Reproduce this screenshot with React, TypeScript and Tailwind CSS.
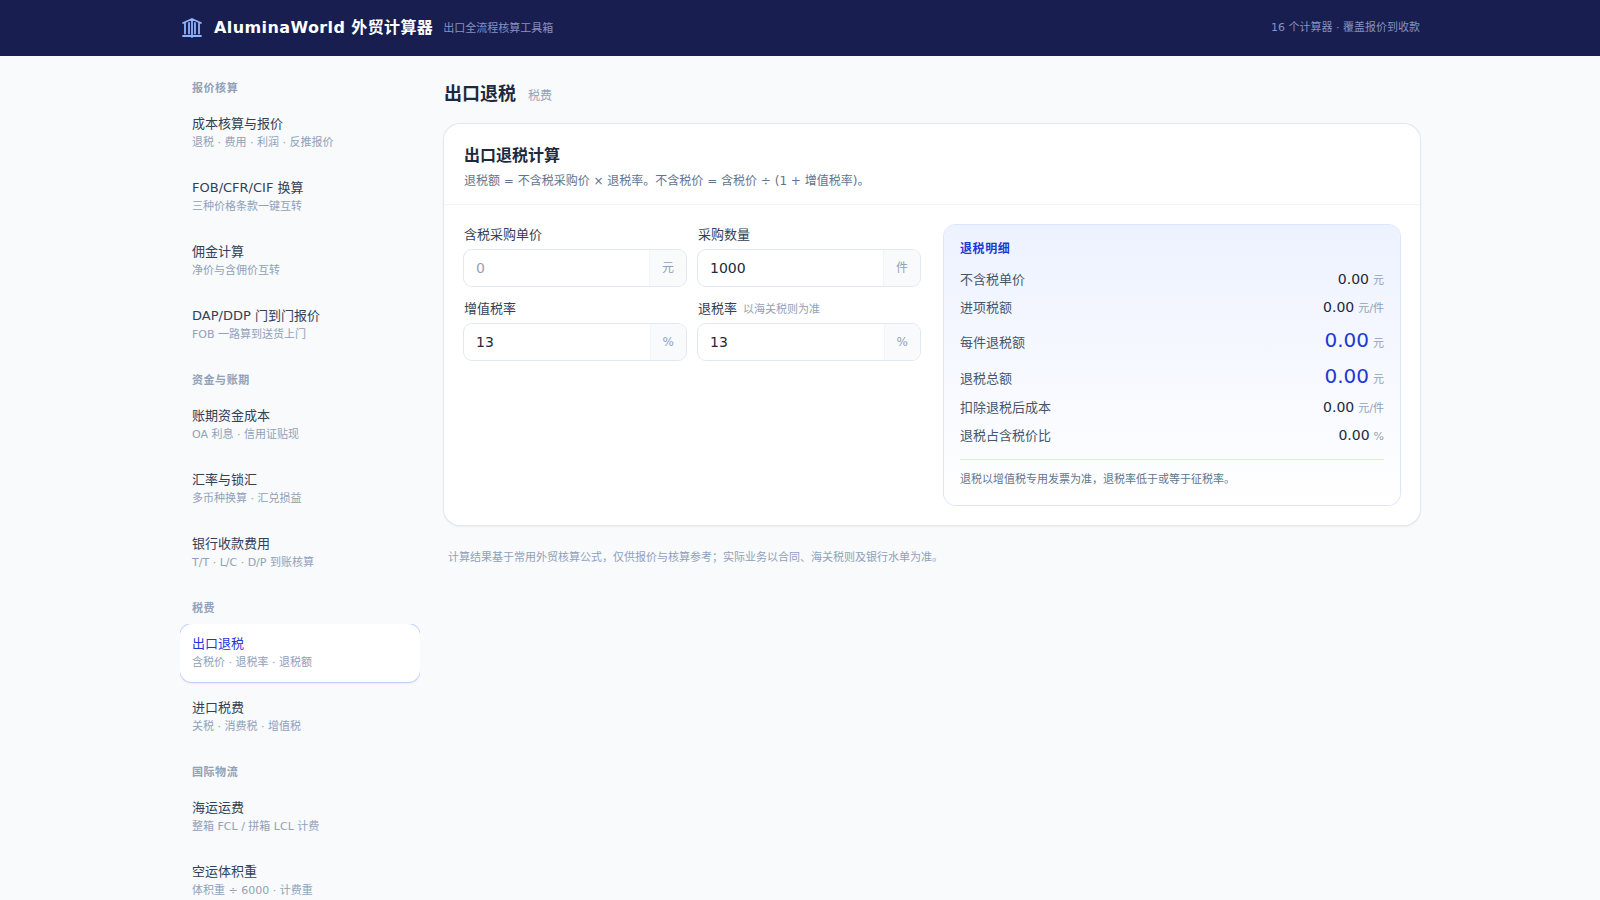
import { useId, useState } from "react";

interface NavItem {
  title: string;
  desc: string;
}

interface NavGroup {
  label: string;
  items: NavItem[];
}

const groups: NavGroup[] = [
  {
    label: "报价核算",
    items: [
      { title: "成本核算与报价", desc: "退税 · 费用 · 利润 · 反推报价" },
      { title: "FOB/CFR/CIF 换算", desc: "三种价格条款一键互转" },
      { title: "佣金计算", desc: "净价与含佣价互转" },
      { title: "DAP/DDP 门到门报价", desc: "FOB 一路算到送货上门" },
    ],
  },
  {
    label: "资金与账期",
    items: [
      { title: "账期资金成本", desc: "OA 利息 · 信用证贴现" },
      { title: "汇率与锁汇", desc: "多币种换算 · 汇兑损益" },
      { title: "银行收款费用", desc: "T/T · L/C · D/P 到账核算" },
    ],
  },
  {
    label: "税费",
    items: [
      { title: "出口退税", desc: "含税价 · 退税率 · 退税额" },
      { title: "进口税费", desc: "关税 · 消费税 · 增值税" },
    ],
  },
  {
    label: "国际物流",
    items: [
      { title: "海运运费", desc: "整箱 FCL / 拼箱 LCL 计费" },
      { title: "空运体积重", desc: "体积重 ÷ 6000 · 计费重" },
    ],
  },
];

const Logo: React.FC = () => (
  <svg
    className="h-6 w-6 text-[#8eb4ff]"
    viewBox="0 0 24 24"
    fill="none"
    stroke="currentColor"
    strokeWidth="1.8"
    strokeLinecap="round"
    strokeLinejoin="round"
    aria-hidden="true"
  >
    <path d="M3 7l9-4 9 4M5 7v10.5M9 7v10.5M12 3v18M15 7v10.5M19 7v10.5M3 20h18" />
  </svg>
);

const Header: React.FC = () => (
  <header className="bg-[#181e4f]">
    <div className="mx-auto flex h-14 max-w-7xl items-center justify-between px-5">
      <div className="flex items-center gap-2.5">
        <Logo />
        <span className="text-base font-bold tracking-wide text-white">
          AluminaWorld 外贸计算器
        </span>
        <span className="pt-0.5 text-[11px] leading-[18px] text-[#8592c4]">
          出口全流程核算工具箱
        </span>
      </div>
      <span className="text-[11px] text-[#8592c4]">
        16 个计算器 · 覆盖报价到收款
      </span>
    </div>
  </header>
);

interface SidebarProps {
  active: string;
  onSelect: (title: string) => void;
}

const Sidebar: React.FC<SidebarProps> = ({ active, onSelect }) => (
  <nav className="flex w-60 shrink-0 flex-col gap-[18px]">
    {groups.map((group) => (
      <section key={group.label}>
        <h2 className="mb-[7px] px-3 text-[11px] leading-[17px] font-bold tracking-wider text-slate-400">
          {group.label}
        </h2>
        <ul className="-mb-0.5 flex flex-col gap-1.5 overflow-hidden pb-0.5">
          {group.items.map((item) => (
            <li key={item.title}>
              <button
                type="button"
                onClick={() => onSelect(item.title)}
                className={`block w-full rounded-xl px-3 py-2.5 text-left ${
                  item.title === active
                    ? "bg-white shadow-sm ring-1 ring-[#bfd3fe]"
                    : ""
                }`}
              >
                <span
                  className={`block text-[13px] leading-[19px] ${
                    item.title === active ? "text-[#1e38d6]" : "text-slate-700"
                  }`}
                >
                  {item.title}
                </span>
                <span className="block text-[11px] leading-[19px] text-slate-400">
                  {item.desc}
                </span>
              </button>
            </li>
          ))}
        </ul>
      </section>
    ))}
  </nav>
);

interface FieldProps {
  label: string;
  hint?: string;
  unit: string;
  value: string;
  onChange: (value: string) => void;
}

const Field: React.FC<FieldProps> = ({ label, hint, unit, value, onChange }) => {
  const id = useId();
  return (
    <div>
      <label
        htmlFor={id}
        className="mb-1.5 flex h-[19px] items-baseline gap-1.5 text-[13px] leading-[19px] text-slate-700"
      >
        {label}
        {hint && <span className="text-[11px] text-slate-400">{hint}</span>}
      </label>
      <div className="flex h-9 overflow-hidden rounded-lg bg-white ring-1 ring-slate-200">
        <input
          id={id}
          inputMode="decimal"
          placeholder="0"
          value={value}
          onChange={(e) => onChange(e.target.value)}
          className="min-w-0 flex-1 px-3 text-sm text-slate-800 outline-none placeholder:text-gray-400"
        />
        <span className="flex items-center border-l border-slate-100 bg-slate-50 px-3 text-xs text-slate-400">
          {unit}
        </span>
      </div>
    </div>
  );
};

interface ResultRowProps {
  label: string;
  value: number;
  unit: string;
  big?: boolean;
}

const ResultRow: React.FC<ResultRowProps> = ({ label, value, unit, big }) => (
  <div
    className={`flex items-baseline justify-between ${
      big ? "h-9 pt-[5px]" : "h-7 pt-1"
    }`}
  >
    <dt className="text-[13px] leading-5 text-slate-600">{label}</dt>
    <dd className="flex items-baseline gap-1">
      <span
        className={
          big
            ? "text-xl leading-7 text-[#1e38d6]"
            : "text-sm leading-5 text-slate-800"
        }
      >
        {value.toFixed(2)}
      </span>
      <span className="text-[11px] leading-4 text-slate-400">{unit}</span>
    </dd>
  </div>
);

const RebateCalculator: React.FC = () => {
  const [price, setPrice] = useState("");
  const [qty, setQty] = useState("1000");
  const [vat, setVat] = useState("13");
  const [rebate, setRebate] = useState("13");

  const gross = Number(price) || 0;
  const net = gross / (1 + (Number(vat) || 0) / 100);
  const unitRebate = net * ((Number(rebate) || 0) / 100);

  return (
    <section className="rounded-2xl bg-white shadow-sm ring-1 ring-slate-200">
      <div className="border-b border-slate-100 px-5 pt-5 pb-3.5">
        <h2 className="text-base leading-6 font-bold text-slate-800">
          出口退税计算
        </h2>
        <p className="mt-1 text-xs leading-[18px] text-slate-500">
          退税额 = 不含税采购价 × 退税率。不含税价 = 含税价 ÷ (1 + 增值税率)。
        </p>
      </div>
      <div className="grid gap-6 p-5 md:grid-cols-2">
        <div className="grid grid-cols-2 content-start gap-x-3 gap-y-[13px]">
          <Field label="含税采购单价" unit="元" value={price} onChange={setPrice} />
          <Field label="采购数量" unit="件" value={qty} onChange={setQty} />
          <Field label="增值税率" unit="%" value={vat} onChange={setVat} />
          <Field
            label="退税率"
            hint="以海关税则为准"
            unit="%"
            value={rebate}
            onChange={setRebate}
          />
        </div>
        <div className="rounded-xl bg-linear-to-b from-[#edf2ff] to-white p-4 ring-1 ring-[#dbe6fe]">
          <h3 className="mb-2 text-xs leading-4 font-bold tracking-wider text-[#1e38d6]">
            退税明细
          </h3>
          <dl>
            <ResultRow label="不含税单价" value={net} unit="元" />
            <ResultRow label="进项税额" value={gross - net} unit="元/件" />
            <ResultRow label="每件退税额" value={unitRebate} unit="元" big />
            <ResultRow
              label="退税总额"
              value={unitRebate * (Number(qty) || 0)}
              unit="元"
              big
            />
            <ResultRow label="扣除退税后成本" value={gross - unitRebate} unit="元/件" />
            <ResultRow
              label="退税占含税价比"
              value={gross ? (unitRebate / gross) * 100 : 0}
              unit="%"
            />
          </dl>
          <p className="mt-2.5 border-t border-[#dbe6fe] pt-[11px] text-[11px] leading-[18px] text-slate-500">
            退税以增值税专用发票为准，退税率低于或等于征税率。
          </p>
        </div>
      </div>
    </section>
  );
};

const App: React.FC = () => {
  const [active, setActive] = useState("出口退税");

  return (
    <div className="min-h-screen bg-slate-50 font-['DejaVu_Sans','Noto_Sans_CJK_SC',sans-serif] text-slate-800">
      <Header />
      <div className="mx-auto flex max-w-7xl gap-6 px-5 py-6">
        <Sidebar active={active} onSelect={setActive} />
        <main className="min-w-0 flex-1">
          <div className="mb-4 flex items-baseline gap-3">
            <h1 className="text-lg leading-7 font-bold text-slate-800">出口退税</h1>
            <span className="text-xs text-slate-400">税费</span>
          </div>
          <RebateCalculator />
          <p className="mt-6 px-1 text-[11px] leading-[18px] text-slate-400">
            计算结果基于常用外贸核算公式，仅供报价与核算参考；实际业务以合同、海关税则及银行水单为准。
          </p>
        </main>
      </div>
    </div>
  );
};

export default App;
